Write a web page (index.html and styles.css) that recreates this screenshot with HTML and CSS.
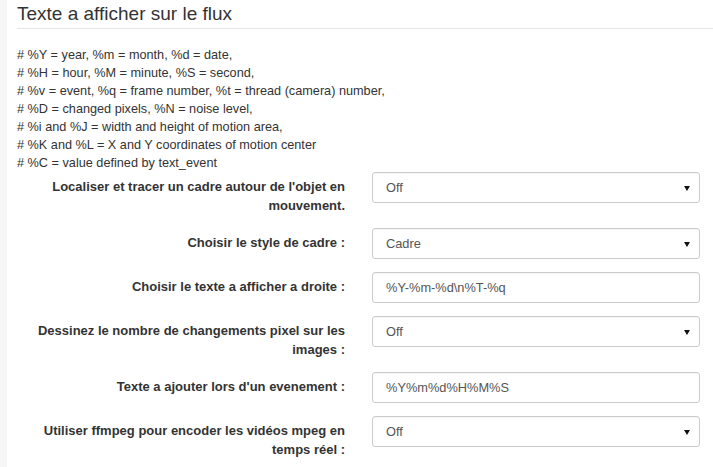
FILE: index.html
```html
<!DOCTYPE html>
<html lang="fr">
<head>
<meta charset="utf-8">
<title>Texte a afficher sur le flux</title>
<link rel="stylesheet" href="styles.css">
</head>
<body>
<div class="page">
  <div class="strip"></div>
  <main class="content">
    <h2 class="legend">Texte a afficher sur le flux</h2>
    <div class="help">
      <div># %Y = year, %m = month, %d = date,</div>
      <div># %H = hour, %M = minute, %S = second,</div>
      <div># %v = event, %q = frame number, %t = thread (camera) number,</div>
      <div># %D = changed pixels, %N = noise level,</div>
      <div># %i and %J = width and height of motion area,</div>
      <div># %K and %L = X and Y coordinates of motion center</div>
      <div># %C = value defined by text_event</div>
    </div>
    <form class="form">
      <div class="group">
        <label class="label">Localiser et tracer un cadre autour de l'objet en mouvement.</label>
        <div class="control select"><span>Off</span></div>
      </div>
      <div class="group">
        <label class="label">Choisir le style de cadre :</label>
        <div class="control select"><span>Cadre</span></div>
      </div>
      <div class="group">
        <label class="label">Choisir le texte a afficher a droite :</label>
        <div class="control"><span>%Y-%m-%d\n%T-%q</span></div>
      </div>
      <div class="group">
        <label class="label">Dessinez le nombre de changements pixel sur les images :</label>
        <div class="control select"><span>Off</span></div>
      </div>
      <div class="group">
        <label class="label">Texte a ajouter lors d'un evenement :</label>
        <div class="control"><span>%Y%m%d%H%M%S</span></div>
      </div>
      <div class="group">
        <label class="label">Utiliser ffmpeg pour encoder les vidéos mpeg en temps réel :</label>
        <div class="control select"><span>Off</span></div>
      </div>
    </form>
  </main>
</div>
</body>
</html>
```

FILE: styles.css
```css
html, body {
  margin: 0;
  padding: 0;
  background: #fff;
}
body {
  font-family: "Liberation Sans", Arial, sans-serif;
  font-size: 12.7px;
  line-height: 18px;
  color: #333;
}
.page {
  display: flex;
  min-height: 467px;
}
.strip {
  width: 7px;
  flex: none;
  background: #f6f6f6;
}
.content {
  flex: 1;
  padding-left: 10px;
}
.legend {
  margin: 0 0 17px 0;
  padding: 3px 0 3px 0;
  font-size: 19px;
  font-weight: normal;
  line-height: 22px;
  color: #333;
  border-bottom: 1px solid #e5e5e5;
}
.help {
  margin: 0;
}
.form {
  margin: 0;
  padding-right: 13px;
}
.group {
  display: grid;
  grid-template-columns: 328px 328px;
  column-gap: 27px;
  margin-bottom: 13px;
  align-items: start;
}
.label {
  text-align: right;
  font-weight: bold;
  font-size: 13px;
  line-height: 19px;
  padding-top: 5px;
}
.control {
  position: relative;
  height: 29px;
  border: 1px solid #ccc;
  border-radius: 3px;
  padding-left: 13px;
  color: #555;
  font-size: 12.8px;
  line-height: 29px;
  box-shadow: inset 0 1px 1px rgba(0,0,0,0.04);
}
.select::after {
  content: "";
  position: absolute;
  right: 9px;
  top: 13px;
  border-left: 3px solid transparent;
  border-right: 3px solid transparent;
  border-top: 5px solid #111;
}
```
